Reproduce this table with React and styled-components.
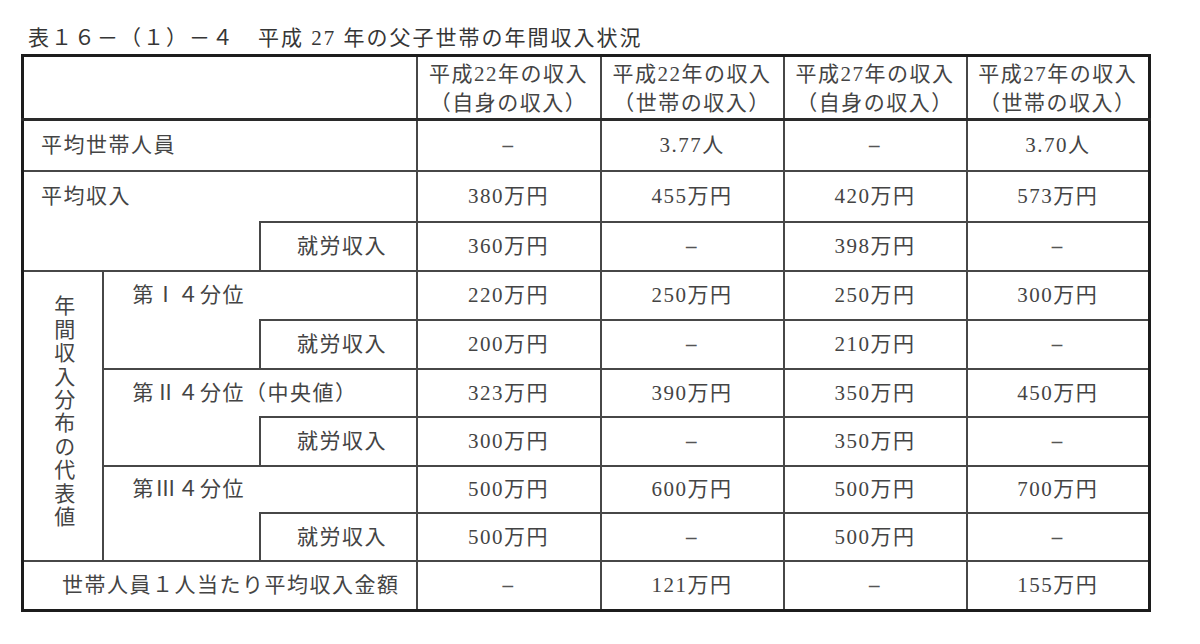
import React from 'react';
import styled, { createGlobalStyle } from 'styled-components';

const GlobalStyle = createGlobalStyle`
	body {
		margin: 0;
		background: #ffffff;
	}
`;

const Page = styled.div`
	padding: 24px 0 0 21px;
	font-family: 'Liberation Serif', 'Noto Sans CJK JP', serif;
	color: #444;
`;

const Title = styled.div`
	font-size: 21px;
	letter-spacing: 2px;
	line-height: 28px;
	padding-left: 7px;
	margin-bottom: 2px;
	color: #363636;
`;

const Table = styled.table`
	border-collapse: collapse;
	table-layout: fixed;
	width: 1129px;
	border: 3px solid #1c1c1c;
	font-size: 21px;
	letter-spacing: 1.5px;
	line-height: 28px;
`;

const Row = styled.tr`
	height: ${({ $h }) => $h}px;
`;

const Cell = styled.td`
	border: 2px solid #474747;
	border-top-style: ${({ $noTop }) => ($noTop ? 'hidden' : 'solid')};
	padding: 0 0 0 ${({ $pl }) => $pl || 0}px;
	text-align: ${({ $align }) => $align || 'center'};
	vertical-align: middle;
	white-space: nowrap;
`;

const Head = styled(Cell)`
	border-bottom: 3px solid #2a2a2a;
	line-height: 29px;
	padding-top: 2px;
`;

const Dash = styled.span`
	font-weight: bold;
	color: #555;
`;

const Vertical = styled.span`
	display: inline-block;
	writing-mode: vertical-rl;
	letter-spacing: 2.4px;
	line-height: 24px;
`;

const columns = [80, 157, 157, 184, 183, 183, 183];

const headers = [
	['平成22年の収入', '（自身の収入）'],
	['平成22年の収入', '（世帯の収入）'],
	['平成27年の収入', '（自身の収入）'],
	['平成27年の収入', '（世帯の収入）'],
];

const D = '–';

const quartiles = [
	{ label: '第Ⅰ４分位', main: ['220万円', '250万円', '250万円', '300万円'], work: ['200万円', D, '210万円', D], h: [49, 49] },
	{ label: '第Ⅱ４分位（中央値）', main: ['323万円', '390万円', '350万円', '450万円'], work: ['300万円', D, '350万円', D], h: [48, 49] },
	{ label: '第Ⅲ４分位', main: ['500万円', '600万円', '500万円', '700万円'], work: ['500万円', D, '500万円', D], h: [47, 48] },
];

const Values = ({ items }) =>
	items.map((v, i) => <Cell key={i}>{v === D ? <Dash>{v}</Dash> : v}</Cell>);

export default function App() {
	return (
		<Page>
			<GlobalStyle />
			<Title>表１６－（１）－４　平成 27 年の父子世帯の年間収入状況</Title>
			<Table>
				<colgroup>
					{columns.map((w, i) => (
						<col key={i} style={{ width: w }} />
					))}
				</colgroup>
				<tbody>
					<Row $h={64}>
						<Head colSpan={3} />
						{headers.map(([a, b], i) => (
							<Head key={i}>
								{a}
								<br />
								{b}
							</Head>
						))}
					</Row>
					<Row $h={51}>
						<Cell colSpan={3} $align="left" $pl={17}>
							平均世帯人員
						</Cell>
						<Values items={[D, '3.77人', D, '3.70人']} />
					</Row>
					<Row $h={51}>
						<Cell colSpan={3} $align="left" $pl={17}>
							平均収入
						</Cell>
						<Values items={['380万円', '455万円', '420万円', '573万円']} />
					</Row>
					<Row $h={49}>
						<Cell colSpan={2} $noTop />
						<Cell $pl={8}>就労収入</Cell>
						<Values items={['360万円', D, '398万円', D]} />
					</Row>
					{quartiles.map((q, i) => (
						<React.Fragment key={i}>
							<Row $h={q.h[0]}>
								{i === 0 && (
									<Cell rowSpan={6}>
										<Vertical>年間収入分布の代表値</Vertical>
									</Cell>
								)}
								<Cell colSpan={2} $align="left" $pl={29}>
									{q.label}
								</Cell>
								<Values items={q.main} />
							</Row>
							<Row $h={q.h[1]}>
								<Cell $noTop />
								<Cell $pl={8}>就労収入</Cell>
								<Values items={q.work} />
							</Row>
						</React.Fragment>
					))}
					<Row $h={50}>
						<Cell colSpan={3} $align="left" $pl={38}>
							世帯人員１人当たり平均収入金額
						</Cell>
						<Values items={[D, '121万円', D, '155万円']} />
					</Row>
				</tbody>
			</Table>
		</Page>
	);
}
